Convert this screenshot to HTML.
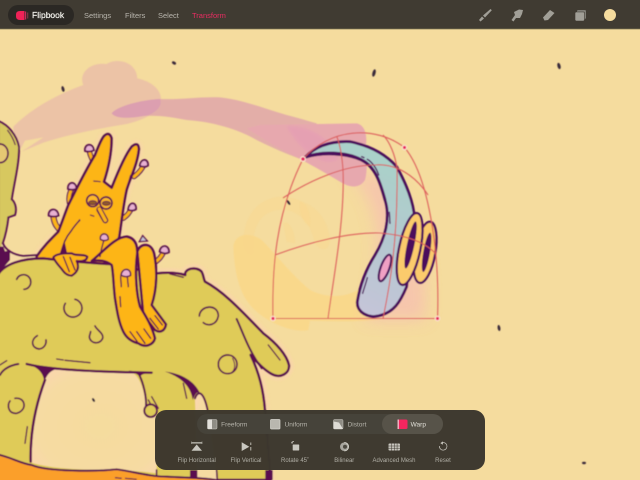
<!DOCTYPE html>
<html><head><meta charset="utf-8"><style>
html,body{margin:0;padding:0;width:640px;height:480px;overflow:hidden;background:#f5dc9e}
svg{display:block;font-family:"Liberation Sans",sans-serif}
</style></head><body>
<svg width="640" height="480" viewBox="0 0 640 480" xmlns="http://www.w3.org/2000/svg">
<defs>
<filter id="b8" x="-30%" y="-30%" width="160%" height="160%"><feGaussianBlur stdDeviation="8"/></filter>
<filter id="b4" x="-30%" y="-30%" width="160%" height="160%"><feGaussianBlur stdDeviation="4"/></filter>
<filter id="s" x="-5%" y="-5%" width="110%" height="110%"><feGaussianBlur stdDeviation="0.45"/></filter>
<linearGradient id="horn" x1="0.6" y1="0" x2="0.3" y2="1"><stop offset="0" stop-color="#a8d2c8"/><stop offset=".5" stop-color="#b5c8d0"/><stop offset="1" stop-color="#c8c4da"/></linearGradient>
<radialGradient id="hole" cx=".55" cy=".55" r=".7"><stop offset="0" stop-color="#f5dc9e"/><stop offset=".7" stop-color="#f6dba2"/><stop offset="1" stop-color="#fbd6b0"/></radialGradient>
</defs>
<rect width="640" height="480" fill="#f5dc9e"/>
<g filter="url(#s)">
<!-- yellow-orange smudge -->
<g transform="translate(220,190) scale(.3333)" fill="#f9d88b">
<path d="M40,170 C45,130 90,125 125,150 C170,195 210,250 270,300 C330,330 390,320 430,290 L470,280 L480,390 C420,395 340,395 270,392 L265,420 C220,430 150,400 110,365 C70,330 45,280 40,170Z"/>
<path d="M70,150 C75,60 130,20 190,20 C260,30 320,60 330,150 C325,190 300,180 285,160 C275,110 240,50 170,60 C120,70 95,110 100,190 C85,200 70,180 70,150Z" opacity=".4"/>
<path d="M190,100 C205,90 225,120 225,160 L200,155Z" opacity=".4"/>
<path d="M240,35 C265,40 275,80 270,110 C250,100 235,70 240,35Z" opacity=".4"/>
</g>
<!-- pink glow near horn -->
<path d="M345,170 C395,170 430,210 425,320 L365,320 C385,260 385,200 345,170Z" fill="#f6c3ae" filter="url(#b8)" opacity=".9"/>
<!-- pink strokes -->
<g transform="translate(0,50) scale(.3333)">
<path d="M40,230 C100,170 180,130 250,105 C235,70 270,35 320,42 C350,22 410,35 412,85 C460,95 490,125 482,160 C470,190 430,210 380,222 C300,235 200,255 130,278 L65,305 L130,262 L75,272 L60,300 C45,270 40,250 40,230Z" fill="#ecc3a6"/>
<path d="M335,190 C350,170 420,150 480,147 C540,150 590,140 660,142 C730,150 800,178 860,195 C900,205 930,215 950,220 L960,345 C900,330 830,300 770,270 C720,240 640,215 560,210 C510,200 470,195 430,198 C390,205 350,208 335,190Z" fill="#e3aea8"/>
<path d="M335,190 C350,170 420,150 480,147 C488,165 472,185 445,195 C400,205 350,208 335,190Z" fill="#dc9fb0"/>
</g>
<g transform="translate(260,125) scale(.3333)">
<path d="M-40,10 L0,0 L290,-5 C315,0 322,30 318,60 C322,100 322,140 315,165 C300,190 270,190 240,170 C190,140 120,100 40,60Z" fill="#e7a8ae"/>
<path d="M80,5 C150,0 210,40 235,100 C200,130 130,90 80,5Z" fill="#e59fb4" filter="url(#b4)" opacity=".8"/>
</g>
<!-- peach halos -->
<g transform="translate(0,240) scale(.3333)" filter="url(#b4)" opacity=".75">
<path d="M-10,110 C10,70 70,55 130,55 C200,62 270,70 330,72 L470,100 C500,97 530,97 556,105 C552,85 590,78 605,95 C612,108 610,116 615,125 C680,160 740,230 790,280 C830,310 860,345 867,375 C870,400 840,417 815,402 C790,388 770,365 752,345 C778,400 790,450 795,510 L812,720 L-10,720Z" fill="none" stroke="#fbd3ac" stroke-width="26"/>
</g>
<g transform="translate(30,125) scale(.3333)" filter="url(#b4)" opacity=".6">
<path d="M20,394 C40,365 60,345 85,320 C95,295 105,265 115,240 C130,210 170,130 195,90 C205,65 212,45 222,33 Q238,18 245,40 C245,80 235,130 222,170 L245,188 C262,145 285,90 305,65 Q325,48 327,72 C322,120 300,160 290,195 C280,240 275,290 268,335 L240,420 L20,420Z" fill="none" stroke="#fbd3ac" stroke-width="24"/>
</g>
<!-- left head -->
<g transform="translate(0,110) scale(.3333)">
<path d="M-5,33 C25,45 50,75 57,110 C58,160 42,220 35,268 C48,280 50,300 45,315 L25,322 C22,350 15,380 8,400 L-5,480Z" fill="#d7c85e" stroke="#5a1050" stroke-width="6"/>
<ellipse cx="0" cy="130" rx="24" ry="28" fill="#e5c873" stroke="#5a1050" stroke-width="5"/>
<path d="M22,60 Q38,80 46,105" fill="none" stroke="#5a1050" stroke-width="3.5"/>
<path d="M5,400 C15,420 40,435 70,438 L120,435 L60,470 L-5,480Z" fill="#f7dba8"/>
<path d="M8,398 C15,420 40,435 70,438 L112,435" fill="none" stroke="#5a1050" stroke-width="6"/>
<path d="M-5,410 L10,410 L25,450 L-5,480Z" fill="#5a1050"/>
</g>
<!-- yellow creature -->
<g transform="translate(30,125) scale(.3333)">
<g fill="none" stroke-linecap="round">
<path d="M70,270 C72,300 85,310 98,325" stroke="#5a1050" stroke-width="18"/><path d="M70,270 C72,300 85,310 98,325" stroke="#fdb516" stroke-width="11"/>
<path d="M127,188 C115,210 115,230 122,245" stroke="#5a1050" stroke-width="16"/><path d="M127,188 C115,210 115,230 122,245" stroke="#fdb516" stroke-width="9"/>
<path d="M178,75 C180,95 188,105 192,115" stroke="#5a1050" stroke-width="16"/><path d="M178,75 C180,95 188,105 192,115" stroke="#fdb516" stroke-width="9"/>
<path d="M342,118 C335,135 325,145 312,155" stroke="#5a1050" stroke-width="16"/><path d="M342,118 C335,135 325,145 312,155" stroke="#fdb516" stroke-width="9"/>
<path d="M305,248 C298,265 290,272 280,280" stroke="#5a1050" stroke-width="16"/><path d="M305,248 C298,265 290,272 280,280" stroke="#fdb516" stroke-width="9"/>
<path d="M402,378 C395,395 388,402 375,412" stroke="#5a1050" stroke-width="16"/><path d="M402,378 C395,395 388,402 375,412" stroke="#fdb516" stroke-width="9"/>
</g>
<path d="M20,394 C40,365 60,345 85,320 C95,295 105,265 115,240 C130,210 170,130 195,90 C205,65 212,45 222,33 Q238,18 245,40 C245,80 235,130 222,170 L245,188 C262,145 285,90 305,65 Q325,48 327,72 C322,120 300,160 290,195 C280,240 275,290 268,335 L240,420 L20,420Z" fill="#fdb516" stroke="#5a1050" stroke-width="8" stroke-linejoin="round"/>
<path d="M92,385 C100,360 105,340 122,320 C135,300 145,290 150,285" fill="none" stroke="#5a1050" stroke-width="4.5"/>
<path d="M92,388 L103,345 L112,388Z" fill="#5a1050"/>
<g fill="#e8b0d2" stroke="#5a1050" stroke-width="5.5">
<path d="M56,272 C54,250 82,245 86,272 C76,276 66,276 56,272Z"/>
<path d="M165,78 C162,55 190,52 192,76 C182,81 174,81 165,78Z"/>
<path d="M114,192 C112,168 140,168 139,191 C130,196 122,195 114,192Z"/>
<path d="M329,122 C332,98 356,100 354,122 C345,128 337,126 329,122Z"/>
<path d="M294,254 C297,228 320,230 318,253 C310,258 302,258 294,254Z"/>
<path d="M389,380 C392,357 418,358 417,382 C407,387 398,386 389,380Z"/>
</g>
<path d="M328,350 L338,332 L352,348Z" fill="#c6c4d8" stroke="#5a1050" stroke-width="4"/>
<!-- face -->
<circle cx="188" cy="227" r="18" fill="#fdb92a" stroke="#5a1050" stroke-width="5"/>
<circle cx="228" cy="234" r="18" fill="#fdb92a" stroke="#5a1050" stroke-width="5"/>
<ellipse cx="188" cy="233" rx="12" ry="6" fill="#8f5a2a" stroke="#5a1050" stroke-width="2.5"/>
<ellipse cx="229" cy="235" rx="12" ry="6" fill="#8f5a2a" stroke="#5a1050" stroke-width="2.5"/>
<path d="M208,254 L226,286" stroke="#5a1050" stroke-width="18" stroke-linecap="round"/>
<path d="M208,252 L226,286" stroke="#fdb516" stroke-width="10" stroke-linecap="round"/>
<path d="M180,270 L193,274 M150,283 L146,288 M212,170 L190,168 M302,150 L292,185" stroke="#5a1050" stroke-width="3.5" fill="none"/>
</g>
<!-- monster body -->
<g transform="translate(0,240) scale(.3333)">
<path d="M-5,40 L30,30 L30,60 L-5,100Z" fill="#5a1050"/>
<path d="M-10,110 C10,70 70,55 130,55 C200,62 270,70 330,72 L470,100 C500,97 530,97 556,105 C552,85 590,78 605,95 C612,108 610,116 615,125 C680,160 740,230 790,280 C830,310 860,345 867,375 C870,400 840,417 815,402 C790,388 770,365 752,345 C778,400 790,450 795,510 L812,720 L-10,720Z" fill="#dfcb58" stroke="#5a1050" stroke-width="7.5" stroke-linejoin="round"/>
<!-- holes -->
<path d="M170,385 C250,395 330,397 392,395 C420,405 435,460 437,495 C425,510 435,530 455,532 L470,525 L470,700 C350,682 200,700 95,668 C85,600 100,520 135,420 C140,405 150,392 170,385Z" fill="url(#hole)"/>
<path d="M585,475 C595,448 612,455 624,515 L652,720 L592,720Z" fill="url(#hole)"/>
<path d="M80,372 L172,386 C150,392 140,405 133,425 C130,400 115,380 80,372Z" fill="#5a1050"/>
<path d="M385,392 L455,398 C435,400 425,402 420,410 C412,402 400,396 385,392Z" fill="#5a1050"/>
<path d="M495,395 C545,400 585,425 600,460 C590,452 585,465 578,480 C575,450 555,415 495,395Z" fill="#5a1050"/>
<path d="M452,532 L472,505 L440,495Z" fill="#5a1050"/>
<path d="M570,690 L592,690 L592,720 L570,720Z M796,690 L818,690 L818,720 L796,720Z" fill="#5a1050"/>
<g fill="none" stroke="#5a1050" stroke-linecap="round">
<path d="M0,405 C10,385 35,375 55,372" stroke-width="6"/>
<path d="M80,372 C150,390 300,396 455,398" stroke-width="7"/>
<path d="M135,420 C105,500 90,580 92,665" stroke-width="7.5"/>
<path d="M418,405 C430,430 440,470 438,497" stroke-width="6"/>
<path d="M585,475 C595,448 612,455 624,515" stroke-width="6"/>
<path d="M470,690 L470,720 M650,690 L652,720" stroke-width="5"/>
<path d="M170,357 L190,360 M195,361 L270,368 M510,102 L550,112 M455,470 L475,505 M445,480 L460,508 M550,430 L560,475 M82,560 L75,610 M805,315 L840,360 M0,375 L20,362" stroke-width="4"/>
<path d="M710,237 C730,280 745,330 785,385" stroke-width="6"/>
<path d="M50,118 A22,22 0 1 1 72,148" stroke-width="5"/>
<path d="M225,178 A27,27 0 1 1 196,190" stroke-width="5"/>
<path d="M112,287 C90,300 95,325 118,327 C130,325 140,315 138,300" stroke-width="5"/>
<path d="M285,258 C290,270 312,280 308,295 C300,315 270,312 268,290 L272,275" stroke-width="5"/>
<path d="M598,228 C600,195 655,190 655,228 C650,255 625,260 610,248" stroke-width="5"/>
<circle cx="683" cy="373" r="28" stroke-width="5"/>
<path d="M698,355 C708,375 705,390 695,398" stroke-width="3"/>
<path d="M45,475 C75,470 85,510 50,520 C25,522 20,495 30,483" stroke-width="5"/>
<circle cx="452" cy="512" r="19" fill="#dfcb58" stroke-width="6"/>
</g>
<!-- orange -->
<path d="M-10,643 C30,650 60,670 95,675 C140,695 290,695 350,688 C400,695 450,710 500,710 C560,714 610,712 660,722 L660,730 L-10,730Z" fill="#fb9f2c" stroke="#5a1050" stroke-width="6"/>
<path d="M345,713 L365,715 M375,715 L410,718" stroke="#5a1050" stroke-width="3.5"/>
</g>
<!-- legs and hand -->
<g transform="translate(30,125) scale(.3333)" stroke="#5a1050" stroke-linejoin="round" stroke-linecap="round">
<path d="M322,380 C330,355 362,350 372,385 C382,430 382,490 365,540 L408,598 C405,618 390,625 375,615 L340,570Z" fill="#fdb516" stroke-width="7.5"/>
<path d="M185,408 C215,385 255,335 290,335 C320,340 325,370 320,400 C315,450 320,510 330,545 C345,570 365,600 375,640 C370,660 345,670 325,655 C305,650 290,640 280,620 C265,590 260,550 255,520 C250,480 250,440 245,420 C225,405 205,405 185,408Z" fill="#fdb516" stroke-width="7.5"/>
<path d="M360,580 L385,612 M375,572 L397,600 M300,620 L322,650 M320,620 L345,655 M342,612 L362,640 M270,515 L272,545 M272,455 L274,485 M292,455 L295,485 M210,395 C213,375 216,365 222,345" fill="none" stroke-width="4"/>
<path d="M70,397 C80,385 105,385 125,385 C140,395 160,385 172,395 C170,408 155,410 140,408 C148,425 145,440 125,452 C110,452 102,442 95,432 C85,420 75,410 70,397Z" fill="#fdb516" stroke-width="6.5"/>
<path d="M100,395 L118,440 M120,397 L135,435" fill="none" stroke-width="4"/>
<path d="M211,343 C208,322 236,320 235,343 C226,349 219,348 211,343Z" fill="#e8b0d2" stroke-width="4.5"/>
<path d="M273,451 C276,426 304,428 302,451 C293,457 283,456 273,451Z" fill="#e8b0d2" stroke-width="4.5"/>
</g>
<!-- horn creature -->
<g transform="translate(260,125) scale(.3333)" stroke="#4c0f5c" stroke-linejoin="round" stroke-linecap="round">
<path d="M135,97 C170,60 220,48 270,50 C320,60 370,80 410,125 C435,170 455,215 462,262 L440,485 C425,520 405,570 340,575 C310,572 290,555 292,530 C300,480 320,430 345,390 C375,340 392,280 375,225 C360,170 345,125 305,105 C260,85 190,80 135,97Z" fill="url(#horn)" stroke-width="8.5"/>
<path d="M135,97 C180,78 260,80 305,105 C345,125 360,170 375,225" fill="none" stroke-width="9"/>
<ellipse cx="375" cy="429" rx="13" ry="42" transform="rotate(20 375 429)" fill="#f0a0c4" stroke-width="6.5"/>
<ellipse cx="495" cy="382" rx="31" ry="93" transform="rotate(10 495 382)" fill="#fbcb6c" stroke-width="7"/>
<ellipse cx="500" cy="382" rx="10" ry="60" transform="rotate(10 500 382)" fill="#4c0f5c" stroke="none"/>
<ellipse cx="449" cy="372" rx="32" ry="110" transform="rotate(12 449 372)" fill="#fbcb6c" stroke-width="7"/>
<ellipse cx="452" cy="360" rx="11" ry="72" transform="rotate(12 452 360)" fill="#4c0f5c" stroke="none"/>
<path d="M305,95 L312,98 M322,103 C335,110 350,130 356,150 M388,262 L390,295 M322,458 C318,475 312,490 308,505" fill="none" stroke-width="4"/>
</g>
<!-- specks -->
<g fill="#3a2a3a">
<ellipse cx="63" cy="89" rx="1.4" ry="3" transform="rotate(-15 63 89)"/>
<ellipse cx="174" cy="63" rx="2.200" ry="1.400" transform="rotate(30 174 63)"/>
<ellipse cx="374" cy="73" rx="1.600" ry="3.800" transform="rotate(15 374 73)"/>
<ellipse cx="559" cy="66" rx="1.600" ry="3.200" transform="rotate(-15 559 66)"/>
<ellipse cx="288.500" cy="202.500" rx="1.200" ry="3" transform="rotate(-35 288.500 202.500)"/>
<ellipse cx="499" cy="328" rx="1.400" ry="3" transform="rotate(-10 499 328)"/>
<ellipse cx="93.500" cy="400" rx="1.200" ry="2.200" transform="rotate(-30 93.500 400)"/>
<ellipse cx="584" cy="463" rx="2" ry="1.200"/>
</g>
<!-- warp grid -->
<g fill="none" stroke="#dc5a5a" stroke-width="1.100" opacity=".95">
<path d="M273,318.500 L437.500,318.500"/>
<path d="M273,318.500 C272,270 275,215 303,159"/>
<path d="M303,159 C330,128 375,125 404.500,147.500"/>
<path d="M404.500,147.500 C428,175 440,250 437.500,318.500"/>
<path d="M283,198 C310,180 345,165 375,165 C395,163 415,175 428,195"/>
<path d="M275,255 C310,242 350,232 380,233 C405,235 425,242 436,254"/>
<path d="M328,318.500 C333,280 345,220 343,170 C342,155 340,145 337,137"/>
<path d="M383,318.500 C390,285 398,240 397,168 C395,155 390,142 383,135"/>
</g>
<g fill="#e8245e" stroke="#fbe3d0" stroke-width="1.200">
<circle cx="303" cy="159" r="2.400"/><circle cx="404.500" cy="147.500" r="2.200"/><circle cx="273" cy="318.500" r="2.200"/><circle cx="437.500" cy="318.500" r="2.200"/>
</g>
</g>
<!-- top bar -->
<rect width="640" height="29" fill="#403b32"/>
<rect y="28.500" width="640" height=".8" fill="#6b6448"/>
<rect x="8" y="5" width="66" height="20" rx="10" fill="#2b2824"/>
<path d="M16,14.500 Q16,11 20,11 L24.500,11 L24.500,20 L20,20 Q16,20 16,16.500Z" fill="#ee2257"/>
<rect x="25" y="11.500" width="1.200" height="8" fill="#c92a58"/>
<rect x="27.300" y="12.500" width=".9" height="6" fill="#9a3a50"/>
<g font-size="7.500" fill="#b8b5ad">
<text x="32" y="18" font-size="8.500" fill="#f4f3ee" stroke="#f4f3ee" stroke-width=".2">Flipbook</text>
<text x="84" y="18">Settings</text>
<text x="125" y="18">Filters</text>
<text x="158" y="18">Select</text>
<text x="192" y="18" fill="#ea2c62">Transform</text>
</g>
<!-- top right icons -->
<g fill="#a19f97" stroke="none">
<path d="M479,20 L482,16.500 L484,18.500 L480.500,21.500Z M483,15.500 L490.500,9 L491.800,10.300 L485,17.500Z"/>
<path d="M511.500,20 L515,15 L514,12 L519,9.500 L523,10 L522,14 L520,18 L516,18 L513.500,21.500Z"/>
<path d="M543,17.500 L550,10 L554.500,13 L548,20 L544.500,20.500Z"/>
<rect x="577" y="10" width="9" height="9" rx="1.200" fill="#807e77"/>
<rect x="575" y="12" width="9.500" height="9" rx="1.200" stroke="#403b32" stroke-width=".6"/>
</g>
<circle cx="610" cy="15" r="6" fill="#f5dc9e"/>
<!-- bottom panel -->
<rect x="155" y="410" width="330" height="60" rx="11" fill="#3c372e" fill-opacity=".985"/>
<rect x="197" y="414" width="246" height="20" rx="10" fill="#46433a"/>
<path d="M392,414 H433 A10,10 0 0 1 433,434 H392 A10,10 0 0 1 392,414Z" fill="#575349"/>
<g fill="#b5b3aa" font-size="6.500" text-anchor="middle">
<text x="234.300" y="426.300">Freeform</text>
<text x="296" y="426.300">Uniform</text>
<text x="357" y="426.300">Distort</text>
<text x="418.300" y="426.300" fill="#e2e0d8">Warp</text>
</g>
<!-- tab icons -->
<rect x="207.500" y="419.500" width="9.500" height="9.500" rx="1" fill="#8f8d85" stroke="#c9c7bf" stroke-width=".5"/><rect x="207.500" y="419.500" width="4.500" height="9.500" fill="#e2e0da"/>
<rect x="270.500" y="419.500" width="9.500" height="9.500" rx="1" fill="#b9b7af" stroke="#d8d6cf" stroke-width=".7"/>
<rect x="333.500" y="419.500" width="9.500" height="9.500" rx="1" fill="#8f8d85" stroke="#c9c7bf" stroke-width=".5"/><path d="M333.500,421.500 L339,422.500 L343,429 L333.500,429Z" fill="#dedcd5"/>
<rect x="397.500" y="419.500" width="10" height="9.500" rx="1.500" fill="#f5265f"/><rect x="397.500" y="419.500" width="1.500" height="9.500" fill="#f0b0c0"/>
<!-- action icons -->
<g fill="#c9c7bf" stroke="none">
<path d="M191.800,442.500 H201.800 V443.200 H191.800Z M191.500,441.500 V444 M202,441.500 V444" stroke="#c9c7bf" stroke-width=".5"/>
<path d="M196.700,444.500 L202,450.700 H191.500Z"/>
<path d="M241.700,442.300 L249.300,446.700 L241.700,451Z"/>
<path d="M250.800,442.500 V445 M250.800,447 V450.500" stroke="#c9c7bf" stroke-width=".9"/>
<rect x="292.700" y="444.500" width="6.500" height="6" rx=".6"/>
<path d="M291.500,442.500 Q292.500,441.500 294,441.500" stroke="#c9c7bf" stroke-width=".7" fill="none"/><path d="M291,443.200 L292.200,441.200 L293,443.400Z"/>
<circle cx="344.300" cy="446.700" r="4.300" fill="#a8a69e"/>
<circle cx="345" cy="446.700" r="2" fill="#4c4940"/>
<path d="M344.300,442.400 A4.300,4.300 0 0 1 344.300,451" fill="none" stroke="#dcdad2" stroke-width=".8"/>
<rect x="388.500" y="443.500" width="11.500" height="7" rx="1" fill="#c9c7bf"/>
<path d="M388.500,446 H400 M388.500,448.200 H400 M391.500,443.500 V450.500 M394.300,443.500 V450.500 M397.100,443.500 V450.500" stroke="#3c372e" stroke-width=".5" fill="none"/>
<path d="M441,443.200 A3.800,3.800 0 1 1 439.400,446" fill="none" stroke="#c9c7bf" stroke-width=".7"/>
<path d="M443,441.400 L440.400,443.100 L442.800,444.700Z"/>
</g>
<g fill="#b0aea5" font-size="6" text-anchor="middle">
<text x="196.700" y="462">Flip Horizontal</text>
<text x="246" y="462">Flip Vertical</text>
<text x="295" y="462">Rotate 45˚</text>
<text x="344.300" y="462">Bilinear</text>
<text x="394" y="462">Advanced Mesh</text>
<text x="443" y="462">Reset</text>
</g>
</svg>
</body></html>
